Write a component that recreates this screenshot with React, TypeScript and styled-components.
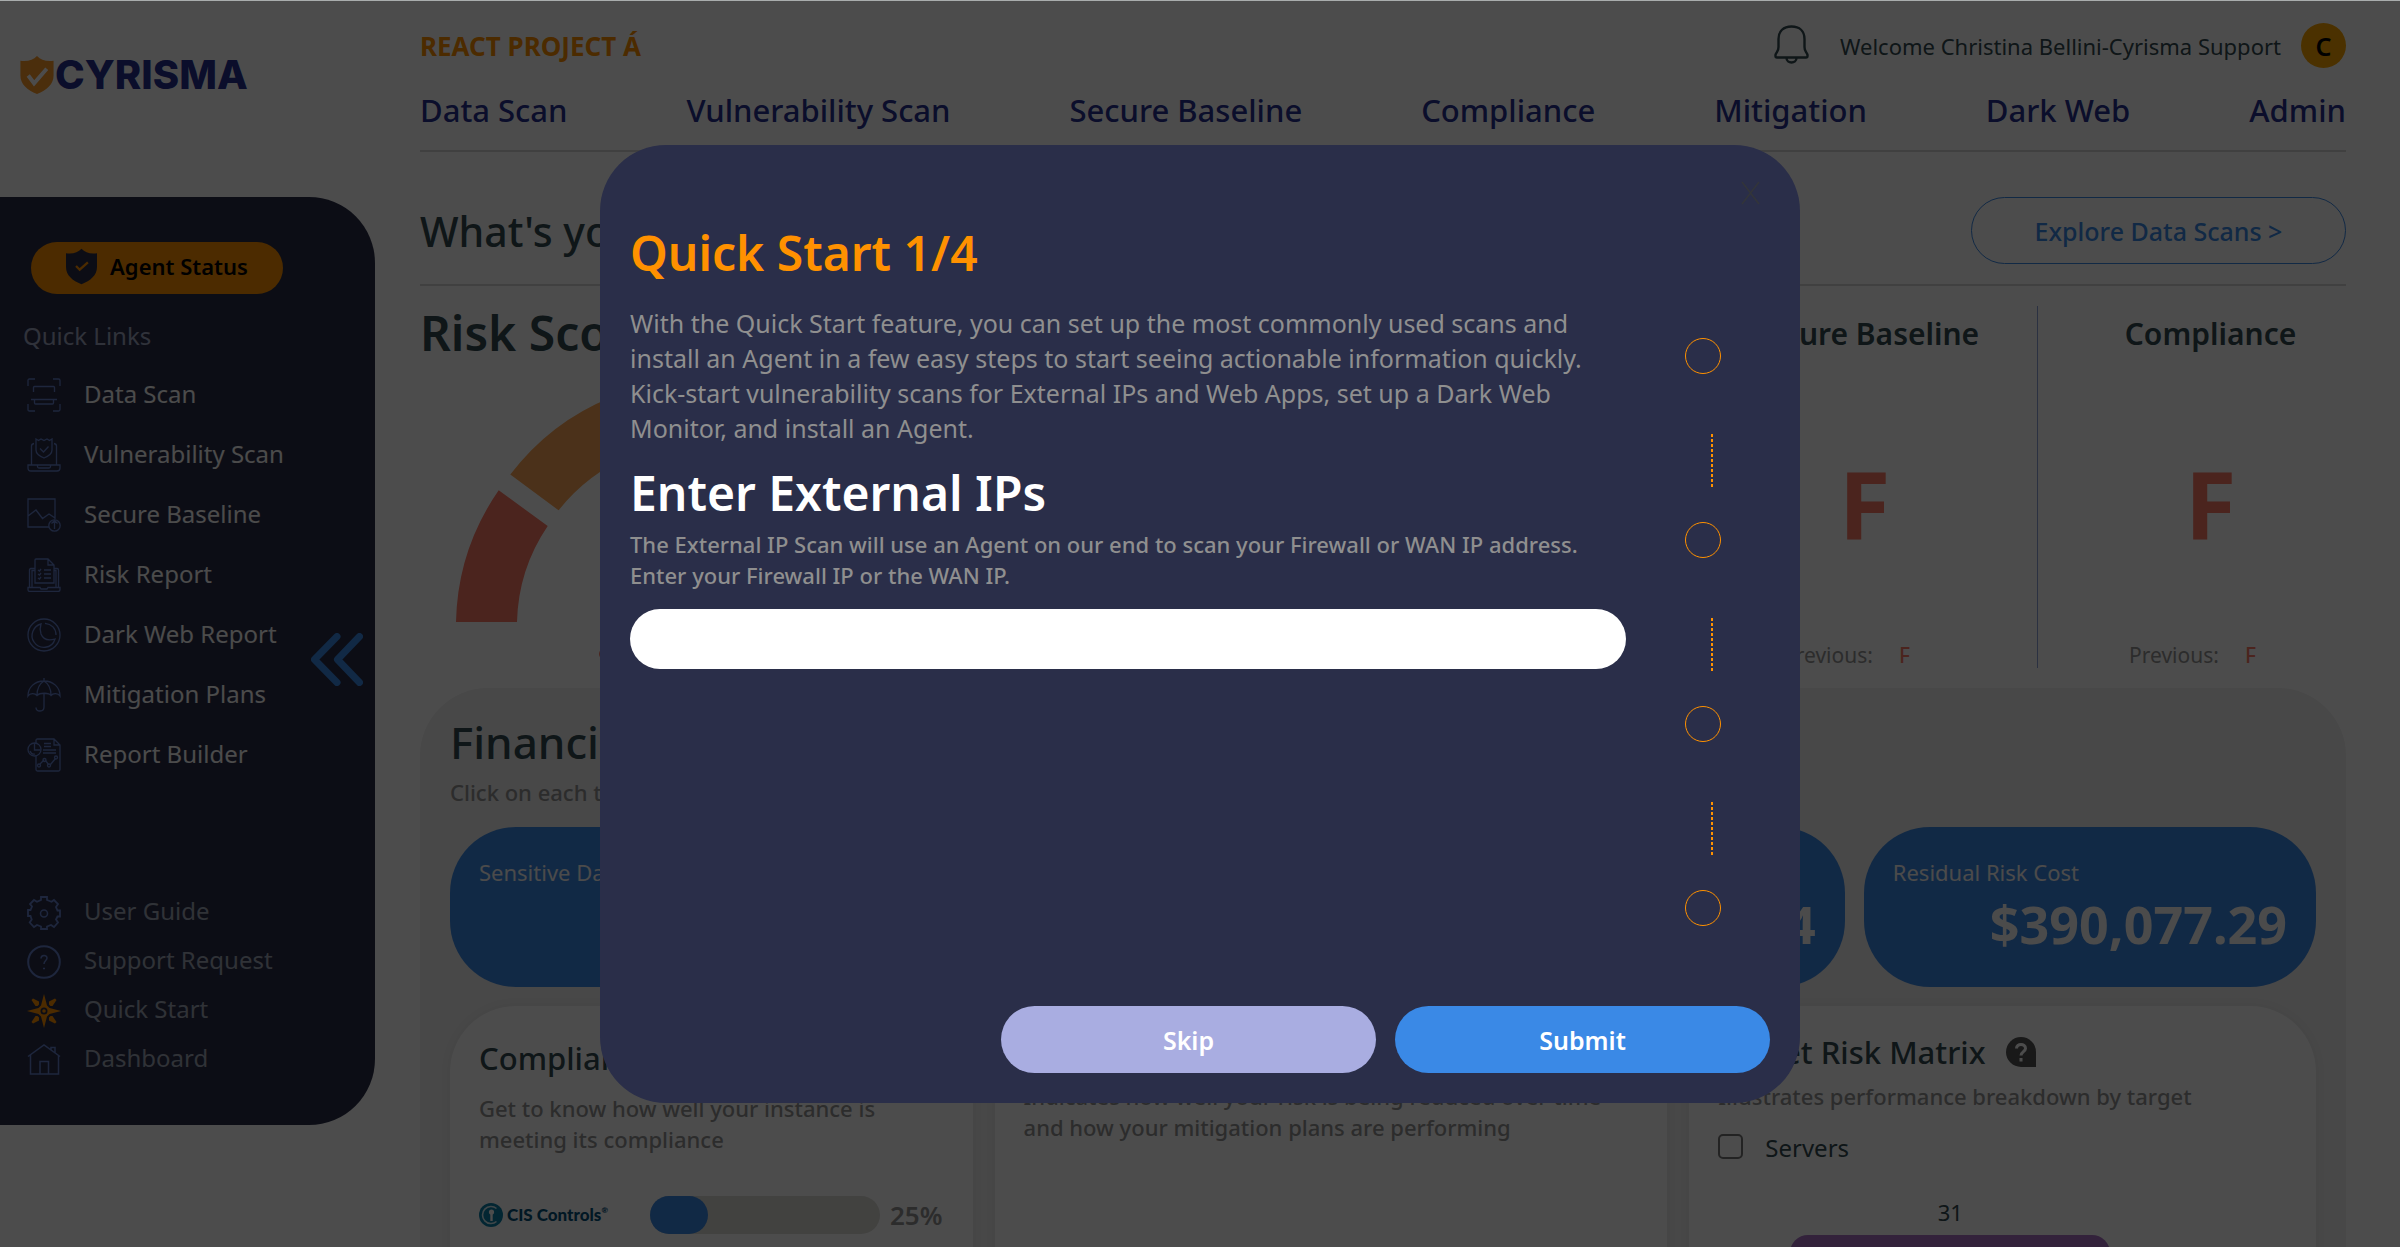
import React, { useId, useState } from "react";
import styled, { createGlobalStyle } from "styled-components";

const color = {
  orange: "#ff9100",
  amber: "#faa500",
  navy: "#262f90",
  blue: "#3a89e6",
  lilac: "#a9ade1",
  panel: "#2a2e49",
  heading: "#324a50",
  muted: "#949494",
  red: "#fa7864",
  line: "#d8d8d8",
  icon: "#6480cc",
};

const GlobalStyle = createGlobalStyle`
  *, *::before, *::after { box-sizing: border-box; }
  body { margin: 0; background: #fff; font-family: "Noto Sans", "Open Sans", sans-serif; }
  h1, h2, h3, p, ul { margin: 0; padding: 0; }
  ul { list-style: none; }
  a { color: inherit; text-decoration: none; }
  button, input { font-family: inherit; }
  svg { display: block; flex: none; }
`;

/* ---------- page frame ---------- */

const Page = styled.div`
  display: flex;
  height: 100vh;
  overflow: hidden;
  border-top: 1px solid #a9adad;
`;

const Side = styled.aside`
  flex: none;
  width: 375px;
`;

const Brand = styled.a`
  display: flex;
  align-items: center;
  gap: 1px;
  height: 196px;
  padding: 0 0 48px 20px;
  color: ${color.navy};
  font: 800 40px/1 Inter, sans-serif;
`;

const SidePanel = styled.div`
  position: relative;
  padding: 45px 0 41px;
  border-radius: 0 66px 66px 0;
  background: ${color.panel};
`;

const AgentButton = styled.button`
  display: flex;
  align-items: center;
  justify-content: center;
  gap: 13px;
  width: 252px;
  height: 52px;
  margin-left: 31px;
  padding: 0 0 4px;
  border: 0;
  border-radius: 26px;
  background: ${color.orange};
  color: #000;
  font-size: 22px;
  font-weight: 600;
`;

const SideTitle = styled.h2`
  margin: 25px 0 12px 23px;
  color: #a0a8c4;
  font-size: 24px;
  font-weight: 400;
  line-height: 34px;
`;

const LinkList = styled.ul<{ $low?: boolean }>`
  margin-top: ${(p) => (p.$low ? "103px" : "0")};
  color: ${(p) => (p.$low ? "#a0a8b8" : "#fafafa")};
`;

const SideLink = styled.a<{ $low?: boolean }>`
  display: flex;
  align-items: center;
  gap: 23px;
  height: ${(p) => (p.$low ? "49px" : "60px")};
  padding-left: 27px;
  font-size: 24px;

  span { padding-bottom: 4px; }
`;

const Collapse = styled.button`
  position: absolute;
  top: 436px;
  right: 12px;
  padding: 0;
  border: 0;
  background: none;
  color: ${color.blue};
`;

const Main = styled.main`
  flex: 1;
  min-width: 0;
  padding: 0 54px 0 45px;
`;

/* ---------- header ---------- */

const Header = styled.header`
  padding: 22px 0 19px;
  border-bottom: 2px solid ${color.line};
`;

const TopRow = styled.div`
  display: flex;
  align-items: center;
  height: 45px;
`;

const Project = styled.a`
  margin-right: auto;
  color: ${color.orange};
  font-size: 26px;
  font-weight: 700;
`;

const Bell = styled.button`
  margin-right: 31px;
  padding: 0 0 2px;
  border: 0;
  background: none;
  color: ${color.heading};
`;

const Welcome = styled.span`
  margin-right: 20px;
  color: ${color.heading};
  font-size: 22px;
`;

const Avatar = styled.button`
  width: 45px;
  height: 45px;
  padding: 0;
  border: 0;
  border-radius: 50%;
  background: ${color.amber};
  font-size: 25px;
  font-weight: 600;
`;

const Nav = styled.nav`
  display: flex;
  justify-content: space-between;
  margin-top: 21px;
  color: ${color.navy};
  font-size: 31px;
  font-weight: 500;
  line-height: 42px;
`;

const Promo = styled.section`
  display: flex;
  align-items: center;
  justify-content: space-between;
  padding: 45px 0 20px;
  border-bottom: 2px solid ${color.line};
`;

const PromoTitle = styled.h2`
  color: ${color.heading};
  font-size: 41px;
  font-weight: 500;
`;

const OutlineLink = styled.a`
  display: flex;
  align-items: center;
  justify-content: center;
  width: 375px;
  height: 67px;
  border: 1px solid ${color.blue};
  border-radius: 34px;
  color: ${color.blue};
  font-size: 25px;
  font-weight: 500;
`;

/* ---------- scores ---------- */

const Scores = styled.section`
  display: grid;
  grid-template-columns: 1fr repeat(2, 346px);
  margin-right: -37px;
  padding: 20px 0;
`;

const RiskTitle = styled.h2`
  color: ${color.heading};
  font-size: 48px;
  font-weight: 600;
  line-height: 54px;
`;

const Gauge = styled.svg`
  margin: 22px 0 20px 36px;
`;

const GaugeLegend = styled.div`
  display: flex;
  align-items: center;
  height: 24px;
  padding-left: 179px;
`;

const Dot = styled.i`
  width: 12px;
  height: 12px;
  border-radius: 50%;
  background: ${color.red};
`;

const Score = styled.article`
  display: flex;
  flex-direction: column;
  align-items: center;
  justify-content: space-between;
  height: 362px;
  padding-top: 7px;
  border-left: 1px solid #8fa6dc;
  color: ${color.heading};
`;

const ScoreTitle = styled.h3`
  font-size: 30px;
  font-weight: 600;
  line-height: 42px;
`;

const Grade = styled.strong`
  padding-top: 8px;
  color: ${color.red};
  font-size: 94px;
  font-weight: 700;
  line-height: 100px;
`;

const Previous = styled.div`
  display: flex;
  gap: 26px;
  padding-right: 36px;
  color: ${color.muted};
  font-size: 21px;
  line-height: 26px;

  b { color: ${color.red}; font-weight: 500; }
`;

/* ---------- financial panel ---------- */

const Financial = styled.section`
  padding: 24px 30px 0;
  border-radius: 68px 68px 0 0;
  background: #f0f0f0;
`;

const FinancialTitle = styled.h2`
  margin-bottom: 5px;
  color: ${color.heading};
  font-size: 44px;
  font-weight: 500;
  line-height: 60px;
`;

const Note = styled.p`
  color: ${color.muted};
  font-size: 22px;
  font-weight: 500;
  line-height: 31px;
`;

const Tiles = styled.div`
  display: grid;
  grid-template-columns: repeat(4, 1fr);
  gap: 19px;
  margin: 19px 0;
`;

const Tile = styled.article`
  padding: 30px 29px 28px;
  border-radius: 66px;
  background: ${color.blue};
  color: #fafafa;
`;

const TileLabel = styled.p`
  font-size: 22px;
  line-height: 30px;
`;

const Amount = styled.p`
  margin-top: 2px;
  font-size: 52px;
  font-weight: 700;
  line-height: 70px;
  text-align: right;
`;

const Cards = styled.div`
  display: grid;
  grid-template-columns: 522fr 672fr 626fr;
  gap: 22px;
`;

const Card = styled.article<{ $roomy?: boolean }>`
  height: 600px;
  padding: ${(p) => (p.$roomy ? "31px" : "25px")} 29px 0;
  border-radius: 66px;
  background: #fff;
  box-shadow: 0 0 12px rgba(0, 0, 0, 0.05);
`;

const CardTitle = styled.h3<{ $roomy?: boolean }>`
  display: flex;
  align-items: center;
  gap: 20px;
  margin-bottom: ${(p) => (p.$roomy ? "14px" : "8px")};
  color: ${color.heading};
  font-size: 31px;
  font-weight: 500;
  line-height: 42px;
`;

const ControlRow = styled.div`
  display: grid;
  grid-template-columns: 171px 230px auto;
  align-items: center;
  margin-top: 41px;
`;

const ControlLogo = styled.span`
  display: flex;
  align-items: center;
  gap: 4px;
  color: #06507a;
  font: 900 17px/26px Lato, sans-serif;

  sup { font-size: 8px; line-height: 8px; align-self: flex-start; margin: 4px 0 0 -4px; }
`;

const Track = styled.div`
  height: 38px;
  border-radius: 19px;
  background: #dcdcd8;
`;

const Fill = styled.div`
  height: 100%;
  border-radius: 19px;
  background: ${color.blue};
`;

const Percent = styled.b`
  padding-left: 10px;
  color: ${color.muted};
  font-size: 26px;
  font-weight: 600;
  line-height: 38px;
`;

const Check = styled.label`
  display: flex;
  align-items: center;
  gap: 22px;
  margin-top: 19px;
  color: ${color.heading};
  font-size: 24px;
  line-height: 34px;

  input {
    appearance: none;
    width: 25px;
    height: 25px;
    margin: 0 0 4px;
    border: 2px solid #767676;
    border-radius: 5px;
    background: #fff;
  }
`;

const Chart = styled.figure`
  width: 320px;
  margin: 32px 0 0 72px;
  color: ${color.heading};
  font-size: 22px;
  line-height: 30px;
  text-align: center;
`;

const ChartBar = styled.div`
  height: 200px;
  margin-top: 8px;
  border-radius: 18px;
  background: #aa72c5;
`;

/* ---------- quick start dialog ---------- */

const Overlay = styled.div`
  position: fixed;
  inset: 1px 0 0;
  display: flex;
  align-items: center;
  justify-content: center;
  background: rgba(0, 0, 0, 0.7);
`;

const Dialog = styled.div`
  position: relative;
  width: 50%;
  padding: 76px 30px 30px;
  border-radius: 66px;
  background: ${color.panel};
`;

const Close = styled.button`
  position: absolute;
  top: 36px;
  right: 40px;
  padding: 0;
  border: 0;
  background: none;
  color: #33353a;
`;

const DialogBody = styled.div`
  display: flex;
  gap: 59px;
`;

const Form = styled.div`
  flex: 1;
`;

const DialogTitle = styled.h2<{ $accent?: boolean }>`
  color: ${(p) => (p.$accent ? color.orange : "#fff")};
  font-size: 48px;
  font-weight: 600;
  line-height: 64px;
`;

const Intro = styled.p`
  margin: 21px 0 15px;
  color: #8f8f8f;
  font-size: 25px;
  line-height: 35px;
`;

const Hint = styled(Note)`
  margin: 4px 0 18px;
  padding-right: 40px;
  color: #8f8f8f;
`;

const Field = styled.input`
  width: 100%;
  height: 60px;
  padding: 0 30px;
  border: 0;
  border-radius: 30px;
  background: #fff;
  font-size: 25px;
`;

const Steps = styled.div`
  width: 85px;
  padding-top: 117px;
`;

const Step = styled.div`
  width: 36px;
  height: 36px;
  border: 1px solid ${color.orange};
  border-radius: 50%;
`;

const Dash = styled.div`
  width: 2px;
  height: 54px;
  margin: 60px 0 34px 26px;
  background: repeating-linear-gradient(${color.orange} 0 3px, transparent 3px 5px);
`;

const Actions = styled.div`
  display: flex;
  justify-content: flex-end;
  gap: 19px;
  margin-top: 80px;
`;

const Action = styled.button<{ $bg: string }>`
  width: 375px;
  height: 67px;
  border: 0;
  border-radius: 34px;
  background: ${(p) => p.$bg};
  color: #fff;
  font-size: 25px;
  font-weight: 600;
`;

/* ---------- drawings ---------- */

const shieldPath = "M17 0c4 4 9 6 17 5v15c0 9-7 15-17 19C7 35 0 29 0 20V5c8 1 13-1 17-5z";

const BrandShield = () => (
  <svg width="34" height="38" viewBox="0 0 34 39" aria-hidden="true">
    <path d={shieldPath} fill="#fa9a28" />
    <path d="M8 20l6 8 13-15" fill="none" stroke="#fff" strokeWidth="4" />
  </svg>
);

const AgentShield = () => (
  <svg width="31" height="37" viewBox="0 0 34 39" aria-hidden="true">
    <path d={shieldPath} fill={color.panel} />
    <path d="M11 19l4 4 9-8" fill="none" stroke={color.orange} strokeWidth="2.5" />
  </svg>
);

const Icon = ({ children, stroke = color.icon }: { children: React.ReactNode; stroke?: string }) => (
  <svg width="34" height="34" viewBox="0 0 34 34" fill="none" stroke={stroke} strokeWidth="1.3" aria-hidden="true">
    {children}
  </svg>
);

const quickLinks: [string, React.ReactNode][] = [
  ["Data Scan", <Icon><path d="M1 8V2.500Q1 1 2.500 1H8M26 1h5.500Q33 1 33 2.500V8M33 26v5.500Q33 33 31.500 33H26M8 33H2.500Q1 33 1 31.500V26M6.500 14V9.500q0-1 1-1h19q1 0 1 1V14M4 21.500h26M7.500 22v3q0 1 1 1h17q1 0 1-1v-3" /></Icon>],
  ["Vulnerability Scan", <Icon><path d="M9 1l2.500 1.500L14 1l3 1.500L20 1l2.500 1.500L25 1v11c0 4-3 6-8 8-5-2-8-4-8-8zM13 10.500l3.500 3.500 5-5.500M7 5.500Q4.500 6 4.500 8v18.500M27 5.500q2.500.5 2.500 2.500v18.500M1 27h32v3q0 3-3 3H4q-3 0-3-3zM10.500 27.500v1q0 1.500 1.500 1.500h10q1.500 0 1.500-1.500v-1" /></Icon>],
  ["Secure Baseline", <Icon><path d="M22 29H1V1h27v20M1 18l8-6 6.500 8.500L22 16l6 4M27.500 31v-8M24.500 25.500l3-3 3 3" /><circle cx="27.500" cy="27.500" r="5.700" /></Icon>],
  ["Risk Report", <Icon><path d="M8 25V2q0-1 1-1h12l6 6v18zM21 1v6h6M11 12l1.500 1L14 11M11 16l1.500 1 1.500-2M11 20l1.500 1 1.500-2M17 12h7M17 16h7M17 20h7M8 10.500H4Q2.500 10.500 2.500 12v17M5 29V12.500h3M27 10.500h3q1.500 0 1.500 1.500v17M29 29V12.500h-2M1 29.500h12l1 1.500h6l1-1.500h12v2q0 2-2 2H3q-2 0-2-2z" /></Icon>],
  ["Dark Web Report", <Icon><circle cx="17" cy="17" r="16" /><path d="M14 6C6 8 2.500 18 7 24c5 7.500 18 7.500 21-3-7 2-12 0-14-5-1.200-3.500-1-7 0-10zM18 5.300c6.500.7 11 5 11 11.700" /></Icon>],
  ["Mitigation Plans", <Icon><path d="M17 0v3M1 18C1 9 8 3 17 3s16 6 16 15c-2-3-7-3-9-.500-2-3-11-3-14 0C8 15 3 15 1 18zM10 17.500C10 11 12 6 17 3c5 3 7 8 7 14.500M17 16v13q0 4-4 4t-4-3.500" /></Icon>],
  ["Report Builder", <Icon><path d="M9 5V2.500Q9 1 10.500 1H27l6 6v24.500q0 1.500-1.500 1.500h-21Q9 33 9 31.500V18M27 1v6h6M17 5.500h7M17 8.500h7M16 12h13M16 15h13M13 26l4-4M18.500 22.500l3 4M23.500 26.500l5-6" /><circle cx="7.500" cy="11.500" r="6.500" /><path d="M7.500 5v7h6M3 13q1.500 4 5 3" /><circle cx="12" cy="27.500" r="1.500" /><circle cx="17.500" cy="22" r="1.500" /><circle cx="22" cy="27.500" r="1.500" /><circle cx="29" cy="19.500" r="1.500" /></Icon>],
];

const helpLinks: [string, React.ReactNode][] = [
  ["User Guide", <Icon><path d="M14 1h6v3l4.500 1.800L27 4l4 4-2 3 1.500 3.500H33v6h-2.500L29 23.500l2 3L27 31l-3-2-4 1.500V33h-6v-2.500L10 29l-3 2-4.300-4.500 2-3L3.500 20H1v-6h2.500L5 10.500 3 8l4-4 3 1.800L14 4z" strokeWidth="1.800" /><circle cx="17" cy="17.500" r="3.500" strokeWidth="1.500" /></Icon>],
  ["Support Request", <Icon><circle cx="17" cy="17" r="15.800" strokeWidth="2" /><path d="M14 13.500c0-4 6-4 6-.500 0 2.500-3 2.500-3 6M16 23.500h2" strokeWidth="1.500" /></Icon>],
  ["Quick Start", (
    <svg width="34" height="34" viewBox="0 0 34 34" fill={color.orange} aria-hidden="true">
      <path fillRule="evenodd" d="M17 0l3 11.500 2.500 2.500L34 17l-11.500 3-2.500 2.500L17 34l-3-11.500-2.500-2.500L0 17l11.500-3 2.500-2.500zM17 13.500a3.500 3.500 0 1 0 0 7 3.500 3.500 0 0 0 0-7z" />
      <circle cx="17" cy="17" r="1.800" />
      <path d="M4.500 6L6 4.500l6 3v3l-1.500 1.500h-2zM29.500 6L28 4.500l-6 3v3l1.500 1.500h2zM4.500 28L6 29.500l6-3v-3L10.500 22h-2zM29.500 28L28 29.500l-6-3v-3l1.500-1.500h2z" />
    </svg>
  )],
  ["Dashboard", <Icon><path d="M1 13.500L17 2l16 11.500M3.500 12v19h28V12M13 31V18.500h8.500V31M24 6.500V4.500h4v5.500" strokeWidth="1.500" /></Icon>],
];

const BellIcon = () => (
  <svg width="35" height="39" viewBox="0 0 35 39" fill="none" stroke="currentColor" strokeWidth="2.400" strokeLinejoin="round" aria-hidden="true">
    <path d="M4.500 22V14C4.500 6 9.500 1.500 17.500 1.500S30.500 6 30.500 14v8q0 3 1.500 5 1.800 2.500 1.500 4 0 1.500-1.500 1.500h-29q-1.500 0-1.500-1.500-.3-1.500 1.500-4 1.500-2 1.500-5zM12.500 33c0 6 10 6 10 0" />
  </svg>
);

const HelpBubble = () => (
  <svg width="30" height="30" viewBox="0 0 30 30" role="img" aria-label="Help">
    <path d="M15 0a15 15 0 0 1 15 15v15H15a15 15 0 0 1 0-30z" fill="#555" />
    <path d="M10.500 11.500c0-5.500 9-5.500 9 0 0 3-4.500 3.300-4.500 7M15 21v3.500" fill="none" stroke="#fff" strokeWidth="3" />
  </svg>
);

const CisMark = () => (
  <svg width="24" height="24" viewBox="0 0 24 24" aria-hidden="true">
    <circle cx="12" cy="12" r="12" fill="#0a7fa8" />
    <path d="M17.500 5.500a8.500 8.500 0 1 0 0 13" fill="none" stroke="#d8eef4" strokeWidth="1.600" />
    <circle cx="12.500" cy="9" r="2.600" fill="#fff" />
    <path d="M11.300 10h2.400v8h-2.400z" fill="#fff" />
  </svg>
);

/* ---------- data ---------- */

const navItems = ["Data Scan", "Vulnerability Scan", "Secure Baseline", "Compliance", "Mitigation", "Dark Web", "Admin"];
const scores = ["Secure Baseline", "Compliance"];
const tiles = [
  ["Sensitive Data", "$4.00"],
  ["Mitigated", "$4.00"],
  ["Total", "$4"],
  ["Residual Risk Cost", "$390,077.29"],
];

function QuickStart({ onClose }: { onClose: () => void }) {
  const fieldId = useId();
  const titleId = useId();
  return (
    <Overlay>
      <Dialog role="dialog" aria-modal="true" aria-labelledby={titleId}>
        <Close type="button" aria-label="Close" onClick={onClose}>
          <svg width="19" height="24" viewBox="0 0 19 24" stroke="currentColor" strokeWidth="1.500" aria-hidden="true">
            <path d="M1 1l17 22M18 1L1 23" />
          </svg>
        </Close>
        <DialogBody>
          <Form>
            <DialogTitle $accent id={titleId}>Quick Start 1/4</DialogTitle>
            <Intro>
              With the Quick Start feature, you can set up the most commonly used scans and install an Agent in a few
              easy steps to start seeing actionable information quickly. Kick-start vulnerability scans for External
              IPs and Web Apps, set up a Dark Web Monitor, and install an Agent.
            </Intro>
            <DialogTitle as="h3"><label htmlFor={fieldId}>Enter External IPs</label></DialogTitle>
            <Hint>
              The External IP Scan will use an Agent on our end to scan your Firewall or WAN IP address. Enter your
              Firewall IP or the WAN IP.
            </Hint>
            <Field id={fieldId} type="text" />
          </Form>
          <Steps>
            <Step />
            <Dash />
            <Step />
            <Dash />
            <Step />
            <Dash />
            <Step />
          </Steps>
        </DialogBody>
        <Actions>
          <Action type="button" $bg={color.lilac}>Skip</Action>
          <Action type="button" $bg={color.blue}>Submit</Action>
        </Actions>
      </Dialog>
    </Overlay>
  );
}

export default function App() {
  const [open, setOpen] = useState(true);
  const progress = 25;
  return (
    <>
      <GlobalStyle />
      <Page>
        <Side>
          <Brand href="#"><BrandShield />CYRISMA</Brand>
          <SidePanel>
            <AgentButton type="button"><AgentShield />Agent Status</AgentButton>
            <SideTitle>Quick Links</SideTitle>
            <LinkList>
              {quickLinks.map(([name, icon]) => (
                <li key={name}><SideLink href="#">{icon}<span>{name}</span></SideLink></li>
              ))}
            </LinkList>
            <LinkList $low>
              {helpLinks.map(([name, icon]) => (
                <li key={name}><SideLink $low href="#">{icon}<span>{name}</span></SideLink></li>
              ))}
            </LinkList>
            <Collapse type="button" aria-label="Collapse menu">
              <svg width="52" height="53" viewBox="0 0 52 53" fill="none" stroke="currentColor" strokeWidth="7" strokeLinecap="round" strokeLinejoin="round" aria-hidden="true">
                <path d="M26 3.500L3.500 26.500 26 49.500M48.500 3.500L26.500 26.500l22 23" />
              </svg>
            </Collapse>
          </SidePanel>
        </Side>
        <Main>
          <Header>
            <TopRow>
              <Project href="#">REACT PROJECT Á</Project>
              <Bell type="button" aria-label="Notifications"><BellIcon /></Bell>
              <Welcome>Welcome Christina Bellini-Cyrisma Support</Welcome>
              <Avatar type="button">C</Avatar>
            </TopRow>
            <Nav>{navItems.map((n) => <a key={n} href="#">{n}</a>)}</Nav>
          </Header>
          <Promo>
            <PromoTitle>What's your</PromoTitle>
            <OutlineLink href="#">Explore Data Scans &gt;</OutlineLink>
          </Promo>
          <Scores>
            <div>
              <RiskTitle>Risk Score</RiskTitle>
              <Gauge width="480" height="240" viewBox="0 0 480 240" aria-hidden="true">
                <path d="M0 240A240 240 0 0 1 42.700 108.300L91.700 144A179 179 0 0 0 61 240z" fill="#fa7864" />
                <path d="M54.300 92.600A240 240 0 0 1 156 15L174 74A179 179 0 0 0 102.600 128.300z" fill="#faa657" />
              </Gauge>
              <GaugeLegend><Dot /></GaugeLegend>
            </div>
            {scores.map((s) => (
              <Score key={s}>
                <ScoreTitle>{s}</ScoreTitle>
                <Grade>F</Grade>
                <Previous><span>Previous:</span><b>F</b></Previous>
              </Score>
            ))}
          </Scores>
          <Financial>
            <FinancialTitle>Financial</FinancialTitle>
            <Note>Click on each tile</Note>
            <Tiles>
              {tiles.map(([label, amount]) => (
                <Tile key={label}><TileLabel>{label}</TileLabel><Amount>{amount}</Amount></Tile>
              ))}
            </Tiles>
            <Cards>
              <Card $roomy>
                <CardTitle $roomy>Compliance</CardTitle>
                <Note>Get to know how well your instance is meeting its compliance</Note>
                <ControlRow>
                  <ControlLogo><CisMark />CIS Controls<sup>®</sup></ControlLogo>
                  <Track><Fill style={{ width: `${progress}%` }} /></Track>
                  <Percent>{progress}%</Percent>
                </ControlRow>
              </Card>
              <Card>
                <CardTitle>Mitigation</CardTitle>
                <Note>Indicates how well your risk is being reduced over time and how your mitigation plans are performing</Note>
              </Card>
              <Card>
                <CardTitle>Target Risk Matrix<HelpBubble /></CardTitle>
                <Note>Illustrates performance breakdown by target</Note>
                <Check><input type="checkbox" />Servers</Check>
                <Chart>31<ChartBar /></Chart>
              </Card>
            </Cards>
          </Financial>
        </Main>
      </Page>
      {open && <QuickStart onClose={() => setOpen(false)} />}
    </>
  );
}
